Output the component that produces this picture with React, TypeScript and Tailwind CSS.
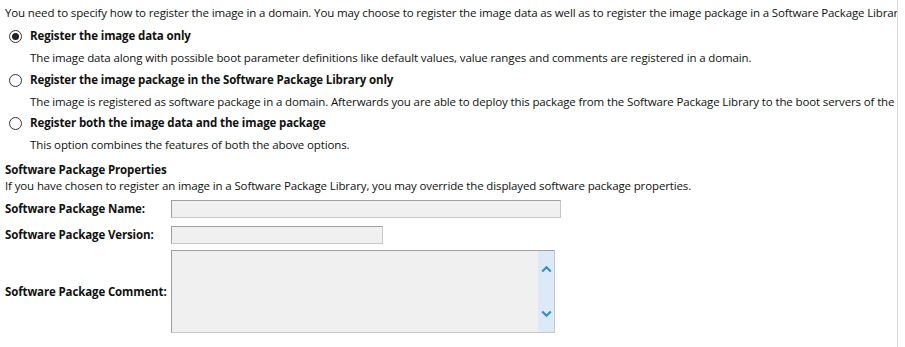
import React from 'react';

const options = [
  {
    title: 'Register the image data only',
    desc: 'The image data along with possible boot parameter definitions like default values, value ranges and comments are registered in a domain.',
    checked: true,
  },
  {
    title: 'Register the image package in the Software Package Library only',
    desc: 'The image is registered as software package in a domain. Afterwards you are able to deploy this package from the Software Package Library to the boot servers of the domain.',
    checked: false,
  },
  {
    title: 'Register both the image data and the image package',
    desc: 'This option combines the features of both the above options.',
    checked: false,
  },
];

const Radio = ({ checked }: { checked: boolean }) => (
  <span className="w-[13px] h-[13px] rounded-full border border-[#333] bg-white flex items-center justify-center shrink-0">
    {checked && <span className="w-[7px] h-[7px] rounded-full bg-[#222]" />}
  </span>
);

const fieldBox = 'bg-[#f0f0f0] border border-[#c8c8c8] border-t-[#a0a0a0] border-l-[#a0a0a0]';

export default function App() {
  return (
    <div className="w-[905px] h-[347px] bg-white flex text-[11.5px] tracking-[-0.13px] text-[#111] font-['Open_Sans',sans-serif]">
      <div className="w-[898px] h-full overflow-hidden border-r border-[#dadada] pl-[5px] pt-[5px] whitespace-nowrap">
        <div className="h-[16px] leading-[16px]">
          You need to specify how to register the image in a domain. You may choose to register the image data as well as to register the image package in a Software Package Library.
        </div>
        <div className="mt-[4px]">
          {options.map((o, i) => (
            <div key={o.title}>
              <div className="h-[22px] flex items-center pl-[4px] gap-[8px]">
                <Radio checked={o.checked} />
                <span className="font-bold">{o.title}</span>
              </div>
              <div className={`${i === 0 ? 'h-[22px]' : 'h-[21px]'} flex items-center pl-[25px]`}>{o.desc}</div>
            </div>
          ))}
        </div>

        <div className="mt-[7px] h-[16px] leading-[16px] font-bold">Software Package Properties</div>
        <div className="h-[16px] leading-[16px]">
          If you have chosen to register an image in a Software Package Library, you may override the displayed software package properties.
        </div>

        <div className="mt-[6px] flex items-center">
          <span className="w-[166px] shrink-0 font-bold">Software Package Name:</span>
          <div className={`${fieldBox} w-[390px] h-[18px]`} />
        </div>
        <div className="mt-[8px] flex items-center">
          <span className="w-[166px] shrink-0 font-bold">Software Package Version:</span>
          <div className={`${fieldBox} w-[212px] h-[18px]`} />
        </div>
        <div className="mt-[6px] flex items-center">
          <span className="w-[166px] shrink-0 font-bold">Software Package Comment:</span>
          <div className={`${fieldBox} w-[384px] h-[83px] flex justify-end`}>
            <div className="w-[16px] h-full bg-[#dbeaf6] flex flex-col items-center justify-between py-[14px]">
              <svg width="11" height="8" viewBox="0 0 11 8">
                <path d="M1.2 6.5 L5.5 2.2 L9.8 6.5" fill="none" stroke="#3a8ccc" strokeWidth="2.2" />
              </svg>
              <svg width="11" height="8" viewBox="0 0 11 8">
                <path d="M1.2 1.5 L5.5 5.8 L9.8 1.5" fill="none" stroke="#3a8ccc" strokeWidth="2.2" />
              </svg>
            </div>
          </div>
        </div>
      </div>
    </div>
  );
}
